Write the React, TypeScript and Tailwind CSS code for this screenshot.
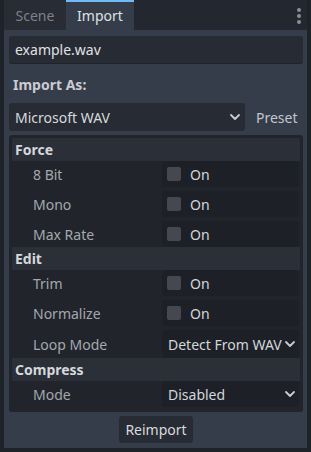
import React from "react";

const Chevron = ({ className = "" }: { className?: string }) => (
  <svg width="12" height="8" viewBox="0 0 12 8" className={className}>
    <polyline points="2,2 6,6 10,2" fill="none" stroke="#c9ccd1" strokeWidth="1.8" strokeLinecap="round" strokeLinejoin="round" />
  </svg>
);

const Header = ({ title }: { title: string }) => (
  <div className="h-[23px] bg-[#2a2f38] flex items-center pl-[3px] text-[14px] font-bold text-[#d5d8dc]">{title}</div>
);

const CheckRow = ({ label }: { label: string }) => (
  <div className="h-[26px] flex items-center">
    <div className="w-[150px] pl-[21px] text-[14px] text-[#a4a8ae]">{label}</div>
    <div className="flex-1 h-full bg-[#1d2127] rounded-[3px] flex items-center pl-[5px] mr-[1px]">
      <div className="w-[14px] h-[14px] rounded-[2px] bg-[#45494f]" />
      <span className="ml-[9px] text-[14px] text-[#d3d6da]">On</span>
    </div>
  </div>
);

const SelectRow = ({ label, value, tall }: { label: string; value: string; tall?: boolean }) => (
  <div className={`${tall ? "h-[28px]" : "h-[26px]"} flex items-center`}>
    <div className="w-[150px] pl-[21px] text-[14px] text-[#a4a8ae]">{label}</div>
    <div className="flex-1 h-full bg-[#1d2127] rounded-[3px] flex items-center pl-[6px] pr-[3px] mr-[1px]">
      <span className="flex-1 text-[14px] text-[#d3d6da] whitespace-nowrap overflow-hidden">{value}</span>
      <Chevron />
    </div>
  </div>
);

export default function App() {
  return (
    <div
      className="w-[311px] h-[452px] bg-[#1e2229] px-[4px] pb-[4px] flex flex-col"
      style={{ fontFamily: '"Noto Sans", "Open Sans", sans-serif' }}
    >
      <div className="h-[30px] flex bg-[#232830] relative">
        <div className="w-[62px] h-full bg-[#272c35] flex items-center justify-center text-[14px] text-[#7d828a]">Scene</div>
        <div className="w-[68px] h-full bg-[#363d4a] border-t-2 border-[#70bafa] flex items-center justify-center text-[14px] text-[#dfe1e4] pb-[2px]">Import</div>
        <div className="absolute right-[6px] top-[8px] flex flex-col gap-[2px]">
          <div className="w-[4px] h-[4px] rounded-full bg-[#8b8f95]" />
          <div className="w-[4px] h-[4px] rounded-full bg-[#8b8f95]" />
          <div className="w-[4px] h-[4px] rounded-full bg-[#8b8f95]" />
        </div>
      </div>
      <div className="flex-1 bg-[#363d4a] pl-[5px] pr-[4px] flex flex-col">
        <div className="mt-[6px] h-[28px] bg-[#262b34] rounded-[3px] border-b border-[#1f232a] flex items-center px-[6px] text-[14px] text-[#e0e2e5]">
          example.wav
        </div>
        <div className="mt-[10px] h-[20px] flex items-center pl-[4px] text-[14px] font-bold text-[#c9ccd1]">Import As:</div>
        <div className="mt-[9px] h-[28px] flex items-center">
          <div className="w-[236px] h-full bg-[#262b34] rounded-[3px] flex items-center pl-[6px] pr-[4px]">
            <span className="flex-1 text-[14px] text-[#d8dade]">Microsoft WAV</span>
            <Chevron />
          </div>
          <span className="ml-[11px] text-[14px] text-[#c3c6cb]">Preset</span>
        </div>
        <div className="mt-[4px] bg-[#21252b] rounded-[3px] p-[3px] pb-[5px] flex flex-col">
          <Header title="Force" />
          <div className="flex flex-col gap-[4px]">
            <CheckRow label="8 Bit" />
            <CheckRow label="Mono" />
            <CheckRow label="Max Rate" />
          </div>
          <Header title="Edit" />
          <div className="flex flex-col gap-[4px]">
            <CheckRow label="Trim" />
            <CheckRow label="Normalize" />
            <SelectRow label="Loop Mode" value="Detect From WAV" tall />
          </div>
          <Header title="Compress" />
          <SelectRow label="Mode" value="Disabled" />
        </div>
        <div className="flex justify-center mt-[4px]">
          <div className="w-[74px] h-[27px] bg-[#262b34] rounded-[3px] flex items-center justify-center text-[14px] text-[#d8dade]">Reimport</div>
        </div>
      </div>
    </div>
  );
}
